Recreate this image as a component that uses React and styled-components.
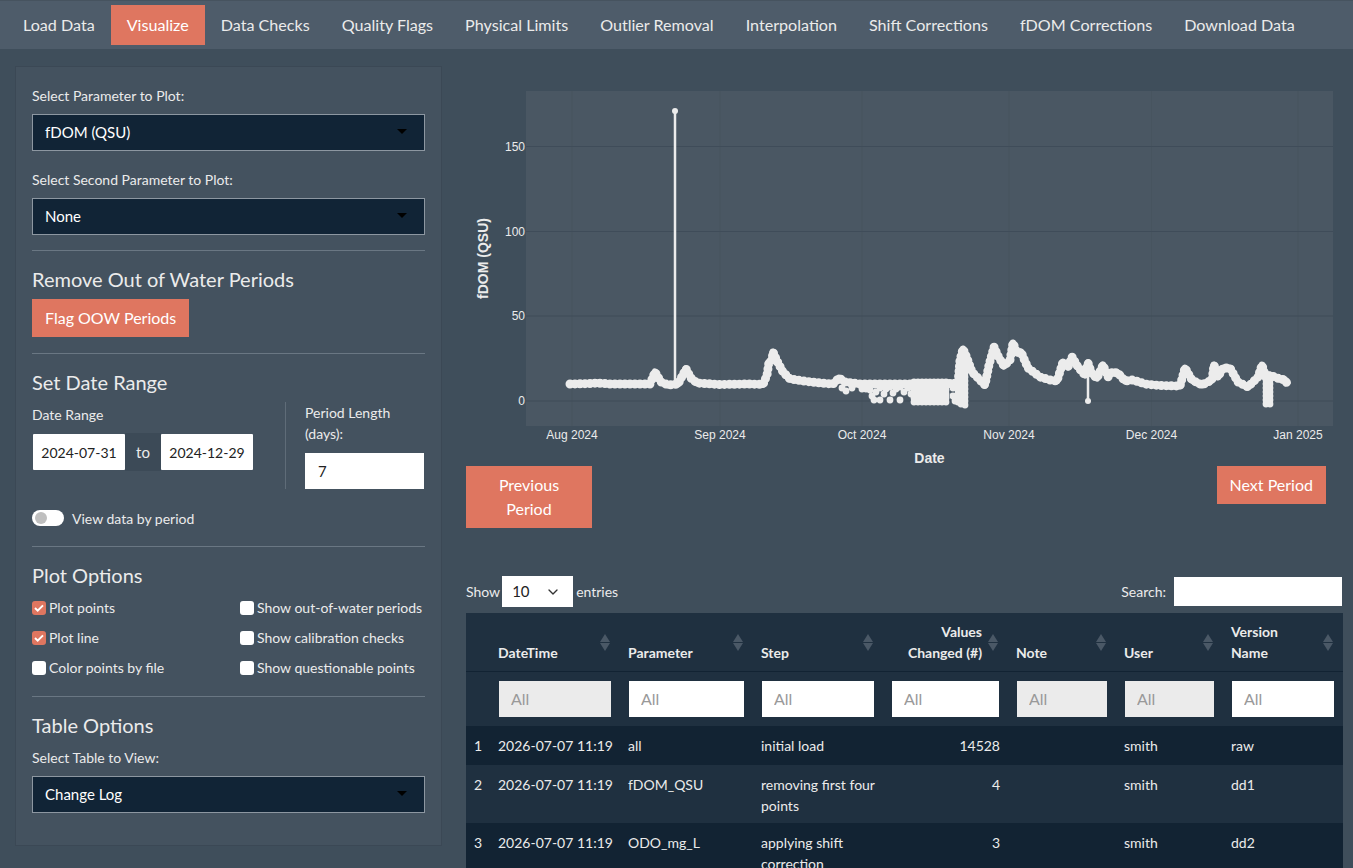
import styled, { createGlobalStyle } from 'styled-components'
import { ChevronDown } from 'lucide-react'

const GlobalStyle = createGlobalStyle`
  html, body {
    margin: 0;
    height: 868px;
    overflow: hidden;
    background: #3f4e5b;
  }
  body {
    font-family: Lato, "Open Sans", sans-serif;
    font-size: 15px;
    line-height: 21px;
    color: #ebebeb;
  }
  * { box-sizing: border-box; }
`

const Navbar = styled.nav`
  display: flex;
  align-items: flex-start;
  height: 49px;
  padding: 5px 0 0 7px;
  background: #4e5c6a;
  border-top: 1px solid #46535f;
  margin-bottom: 17px;
`

const NavItem = styled.a`
  padding: 9px 16px;
  margin-top: -1px;
  height: 40px;
  font-size: 16.11px;
  color: ${p => (p.$active ? '#fff' : '#ebebeb')};
  background: ${p => (p.$active ? '#df7660' : 'transparent')};
`

const Main = styled.div`
  display: flex;
  align-items: flex-start;
  gap: 24px;
  padding-left: 15px;
`

const Sidebar = styled.aside`
  width: 427px;
  flex: none;
  padding: 19px 16px 32px;
  background: #44525f;
  border: 1px solid #3b4855;
`

const Label = styled.div`
  margin-top: ${p => p.$top || 0}px;
  margin-bottom: 8px;
  font-size: 14px;
  line-height: 20px;
`

const Select = styled.div`
  position: relative;
  height: 37px;
  padding: 6px 12px;
  background: #112436;
  border: 1px solid #8d97a1;
  color: #fff;
  line-height: 22px;

  &::after {
    content: '';
    position: absolute;
    right: 17px;
    top: 14px;
    border-left: 5px solid transparent;
    border-right: 5px solid transparent;
    border-top: 5px solid #000;
  }
`

const Rule = styled.hr`
  margin: ${p => p.$top ?? 15}px 0 0;
  border: 0;
  border-top: 1px solid #6a7783;
`

const Heading = styled.h3`
  margin: 17px 0 ${p => p.$bottom ?? 9}px;
  font-size: 20px;
  line-height: 22px;
  font-weight: 400;
  color: #ebebeb;
`

const Button = styled.button`
  display: block;
  flex: none;
  height: ${p => p.$height || 38}px;
  width: ${p => p.$width || 'auto'};
  padding: 6px 13px;
  border: 0;
  background: #df7660;
  color: #fff;
  font: inherit;
  font-size: 16px;
  line-height: 24px;
`

const DateRow = styled.div`
  display: grid;
  grid-template-columns: 253px 1fr;
  height: 85px;
`

const DateColumn = styled.div`
  padding-top: 3px;
`

const DateInputs = styled.div`
  display: flex;
  align-items: center;
  padding-left: 1px;
`

const DateInput = styled.input`
  width: 92px;
  height: 36px;
  padding: 0;
  border: 0;
  border-radius: 1px;
  text-align: center;
  font: inherit;
  font-size: 14px;
  color: #222;
  background: #fff;
`

const ToBox = styled.span`
  width: 36px;
  height: 38px;
  line-height: 38px;
  text-align: center;
  background: #3c4a57;
`

const PeriodColumn = styled.div`
  padding-left: 19px;
  border-left: 1px solid #5f6c78;
  font-size: 14px;
`

const PeriodLabel = styled.div`
  width: 110px;
  margin-bottom: 9px;
`

const PeriodInput = styled.input`
  display: block;
  width: 119px;
  height: 36px;
  padding: 0 13px;
  border: 0;
  font: inherit;
  font-size: 15px;
  color: #222;
  background: #fff;
`

const SwitchRow = styled.div`
  display: flex;
  align-items: center;
  gap: 8px;
  height: 16px;
  margin-top: 23px;
  font-size: 14px;
`

const SwitchTrack = styled.span`
  display: block;
  width: 32px;
  height: 16px;
  padding: 2px 3px;
  border-radius: 8px;
  background: #fff;

  &::before {
    content: '';
    display: block;
    width: 12px;
    height: 12px;
    border-radius: 50%;
    background: #bfbfbf;
  }
`

const CheckGrid = styled.div`
  display: grid;
  grid-template-columns: 208px 1fr;
  grid-auto-rows: 30px;
`

const CheckItem = styled.label`
  display: flex;
  align-items: center;
  gap: 3px;
  font-size: 14px;
  white-space: nowrap;
`

const CheckText = styled.span`
  margin-top: -2px;
`

const CheckBox = styled.span`
  display: flex;
  align-items: center;
  justify-content: center;
  width: 14px;
  height: 14px;
  border-radius: 3px;
  background: ${p => (p.$checked ? '#df7660' : '#fff')};
`

const Content = styled.div`
  width: 877px;
  flex: none;
`

const ChartSvg = styled.svg`
  display: block;
  width: 877px;
  height: 400px;
  font-family: "Liberation Sans", Arial, sans-serif;
`

const PeriodButtons = styled.div`
  display: flex;
  justify-content: space-between;
  align-items: flex-start;
  padding-right: 17px;
`

const TableControls = styled.div`
  display: flex;
  justify-content: space-between;
  align-items: center;
  height: 31px;
  margin-top: 48px;
  margin-bottom: 6px;
  padding-right: 1px;
  font-size: 14px;
`

const ControlGroup = styled.div`
  display: flex;
  align-items: center;
  gap: ${p => p.$gap || 3}px;
`

const LengthSelect = styled.div`
  display: flex;
  align-items: center;
  justify-content: space-between;
  width: 71px;
  height: 31px;
  margin-right: 1px;
  padding: 0 12px 0 10px;
  background: #fff;
  color: #222;
  font-size: 15px;
`

const SearchInput = styled.input`
  width: 168px;
  height: 29px;
  border: 0;
  background: #fff;
`

const Table = styled.table`
  width: 877px;
  table-layout: fixed;
  border-collapse: collapse;
  font-size: 14px;
`

const HeaderCell = styled.th`
  position: relative;
  height: 58px;
  padding: 8px 26px 8px 8px;
  vertical-align: bottom;
  text-align: ${p => (p.$right ? 'right' : 'left')};
  font-weight: 700;
  background: #1f3040;
  border-bottom: 1px solid #122333;

  &::before, &::after {
    content: '';
    position: absolute;
    right: 10px;
    border-left: 5px solid transparent;
    border-right: 5px solid transparent;
    opacity: ${p => (p.$blank ? 0 : 1)};
  }
  &::before {
    top: 21px;
    border-bottom: 8px solid #4a5866;
  }
  &::after {
    top: 30px;
    border-top: 8px solid #4a5866;
  }
`

const FilterCell = styled.td`
  height: 54px;
  padding: 9px;
  background: #1f3040;
`

const FilterInput = styled.input`
  display: block;
  width: 100%;
  height: 36px;
  padding: 0 12px 1px;
  border: 0;
  font: inherit;
  font-size: 16px;
  background: ${p => (p.disabled ? '#ebebeb' : '#fff')};

  &::placeholder {
    color: #999;
    opacity: 1;
  }
`

const Row = styled.tr`
  height: ${p => p.$height}px;
  background: ${p => (p.$odd ? '#122333' : '#1f3040')};
`

const Cell = styled.td`
  padding: 9px 8px 7px;
  vertical-align: top;
  text-align: ${p => (p.$right ? 'right' : 'left')};
  white-space: ${p => (p.$nowrap ? 'nowrap' : 'normal')};
`

const navItems = [
  'Load Data', 'Visualize', 'Data Checks', 'Quality Flags', 'Physical Limits',
  'Outlier Removal', 'Interpolation', 'Shift Corrections', 'fDOM Corrections', 'Download Data',
]

const columns = [
  { name: '', width: 24, blank: true },
  { name: 'DateTime', width: 130, disabled: true, nowrap: true },
  { name: 'Parameter', width: 133 },
  { name: 'Step', width: 130 },
  { name: 'Values Changed (#)', width: 125, right: true },
  { name: 'Note', width: 108, disabled: true },
  { name: 'User', width: 107, disabled: true },
  { name: 'Version Name', width: 120 },
]

const rows = [
  { height: 39, cells: ['1', '2026-07-07 11:19', 'all', 'initial load', '14528', '', 'smith', 'raw'] },
  { height: 58, cells: ['2', '2026-07-07 11:19', 'fDOM_QSU', 'removing first four points', '4', '', 'smith', 'dd1'] },
  { height: 58, cells: ['3', '2026-07-07 11:19', 'ODO_mg_L', 'applying shift correction', '3', '', 'smith', 'dd2'] },
]

// traced from the plot, page coordinates
const trace = [
  [570, 384], [590, 383.5], [597, 383], [610, 384], [640, 384], [650, 384], [655, 372], [661, 382], [668, 385],
  [678, 384], [686, 369], [691, 378], [697, 383], [720, 384.5], [750, 384], [763, 384.5], [767, 375], [769, 362],
  [772, 360], [773, 352], [777, 361], [783, 372], [790, 379], [803, 381], [820, 383], [833, 384], [839, 378],
  [845, 382], [860, 384], [900, 384], [940, 384], [958, 383], [960, 360], [963, 349], [967, 358], [972, 372],
  [980, 380], [985, 385], [989, 365], [994, 347], [998, 356], [1004, 366], [1010, 360], [1013, 343], [1017, 353],
  [1021, 352], [1028, 368], [1040, 377], [1050, 380], [1057, 381], [1063, 362], [1068, 367], [1072, 357], [1078, 367],
  [1085, 375], [1088, 363], [1092, 374], [1097, 378], [1103, 365], [1108, 377], [1112, 372], [1118, 373], [1125, 381],
  [1133, 380], [1145, 384], [1160, 385.5], [1180, 386], [1185, 368], [1192, 380], [1202, 385], [1212, 380], [1214, 365],
  [1218, 377], [1223, 368], [1230, 368], [1238, 382], [1248, 387], [1258, 377], [1262, 365], [1266, 378], [1270, 375],
  [1277, 378], [1285, 380], [1288, 385],
]

const scatter = [
  [872, 396], [874, 400], [880, 400], [876, 392], [884, 394], [886, 389], [890, 400], [893, 393], [896, 389], [900, 400],
  [904, 392], [908, 388], [911, 394], [866, 389], [870, 390], [846, 391], [852, 388], [862, 389], [842, 388], [880, 388],
  [890, 387], [900, 387], [953, 388], [953, 396], [955, 401],
]

// dense clusters of dots under the line
for (let x = 914; x <= 948; x += 4) for (let y = 382; y <= 402; y += 4) scatter.push([x, y])
for (let y = 356; y <= 404; y += 4) { scatter.push([961, y]); scatter.push([965, y + 1]) }
for (let y = 386; y <= 404; y += 4) scatter.push([958, y])
for (let y = 380; y <= 404; y += 4) { scatter.push([1266, y]); scatter.push([1270, y]) }

const yTicks = [[0, 401], [50, 316], [100, 231.5], [150, 146.5]]
const xTicks = [
  ['Aug 2024', 572], ['Sep 2024', 720], ['Oct 2024', 862], ['Nov 2024', 1009], ['Dec 2024', 1151.5], ['Jan 2025', 1298],
]

function Chart() {
  const line = trace.map(p => p.join(',')).join(' ')

  return (
    <ChartSvg viewBox="466 66 877 400">
      <rect x="526" y="91" width="807" height="335" fill="#4a5763" />
      {xTicks.map(([, x]) => (
        <line key={x} x1={x} x2={x} y1="91" y2="426" stroke="#47545f" />
      ))}
      {yTicks.map(([, y]) => (
        <line key={y} x1="526" x2="1333" y1={y} y2={y} stroke="#3f4c59" strokeWidth="1" />
      ))}

      <line x1="675" x2="675" y1="111" y2="384" stroke="#ececec" strokeWidth="2.5" />
      <circle cx="675" cy="111" r="3" fill="#ececec" />
      <line x1="1088" x2="1088" y1="372" y2="401" stroke="#ececec" strokeWidth="2.5" />
      <circle cx="1088" cy="401" r="3" fill="#ececec" />

      <polyline points={line} fill="none" stroke="#ececec" strokeWidth="7" strokeLinejoin="round" />
      <polyline points={line} fill="none" stroke="#ececec" strokeWidth="9" strokeLinecap="round" strokeDasharray="0 5" />
      {scatter.map(([x, y], i) => (
        <circle key={i} cx={x} cy={y} r="3.4" fill="#ececec" />
      ))}

      <g fill="#ebebeb" fontSize="12">
        {yTicks.map(([v, y]) => (
          <text key={v} x="525" y={y + 4} textAnchor="end">{v}</text>
        ))}
        {xTicks.map(([t, x]) => (
          <text key={t} x={x} y="439" textAnchor="middle">{t}</text>
        ))}
      </g>
      <g fill="#ebebeb" fontSize="14" fontWeight="700">
        <text x="929.5" y="463" textAnchor="middle">Date</text>
        <text transform="translate(488 258.5) rotate(-90)" textAnchor="middle">fDOM (QSU)</text>
      </g>
    </ChartSvg>
  )
}

function Check({ checked, children }) {
  return (
    <CheckItem>
      <CheckBox $checked={checked}>
        {checked && (
          <svg width="10" height="8" viewBox="0 0 10 8">
            <path d="M1 4l2.7 2.6L9 1.4" fill="none" stroke="#fff" strokeWidth="2" />
          </svg>
        )}
      </CheckBox>
      <CheckText>{children}</CheckText>
    </CheckItem>
  )
}

export default function App() {
  return (
    <>
      <GlobalStyle />
      <Navbar>
        {navItems.map(item => (
          <NavItem key={item} $active={item === 'Visualize'}>{item}</NavItem>
        ))}
      </Navbar>
      <Main>
        <Sidebar>
          <Label>Select Parameter to Plot:</Label>
          <Select>fDOM (QSU)</Select>
          <Label $top={19}>Select Second Parameter to Plot:</Label>
          <Select>None</Select>
          <Rule />

          <Heading>Remove Out of Water Periods</Heading>
          <Button>Flag OOW Periods</Button>
          <Rule $top={16} />

          <Heading>Set Date Range</Heading>
          <DateRow>
            <DateColumn>
              <Label>Date Range</Label>
              <DateInputs>
                <DateInput readOnly value="2024-07-31" />
                <ToBox>to</ToBox>
                <DateInput readOnly value="2024-12-29" />
              </DateInputs>
            </DateColumn>
            <PeriodColumn>
              <PeriodLabel>Period Length (days):</PeriodLabel>
              <PeriodInput readOnly value="7" />
            </PeriodColumn>
          </DateRow>
          <SwitchRow>
            <SwitchTrack />
            View data by period
          </SwitchRow>
          <Rule $top={20} />

          <Heading $bottom={7}>Plot Options</Heading>
          <CheckGrid>
            <Check checked>Plot points</Check>
            <Check>Show out-of-water periods</Check>
            <Check checked>Plot line</Check>
            <Check>Show calibration checks</Check>
            <Check>Color points by file</Check>
            <Check>Show questionable points</Check>
          </CheckGrid>
          <Rule $top={13} />

          <Heading $bottom={12}>Table Options</Heading>
          <Label>Select Table to View:</Label>
          <Select>Change Log</Select>
        </Sidebar>

        <Content>
          <Chart />
          <PeriodButtons>
            <Button $width="126px" $height={62}>Previous Period</Button>
            <Button>Next Period</Button>
          </PeriodButtons>

          <TableControls>
            <ControlGroup $gap={2}>
              Show
              <LengthSelect>10 <ChevronDown size={16} color="#333" /></LengthSelect>
              entries
            </ControlGroup>
            <ControlGroup $gap={8}>
              Search:
              <SearchInput />
            </ControlGroup>
          </TableControls>

          <Table>
            <colgroup>
              {columns.map((c, i) => <col key={i} width={c.width} />)}
            </colgroup>
            <thead>
              <tr>
                {columns.map((c, i) => (
                  <HeaderCell key={i} $right={c.right} $blank={c.blank}>{c.name}</HeaderCell>
                ))}
              </tr>
              <tr>
                {columns.map((c, i) => (
                  <FilterCell key={i}>
                    {!c.blank && <FilterInput placeholder="All" disabled={c.disabled} />}
                  </FilterCell>
                ))}
              </tr>
            </thead>
            <tbody>
              {rows.map((row, r) => (
                <Row key={r} $height={row.height} $odd={r % 2 === 0}>
                  {row.cells.map((cell, i) => (
                    <Cell key={i} $right={columns[i].right} $nowrap={columns[i].nowrap}>{cell}</Cell>
                  ))}
                </Row>
              ))}
            </tbody>
          </Table>
        </Content>
      </Main>
    </>
  )
}
